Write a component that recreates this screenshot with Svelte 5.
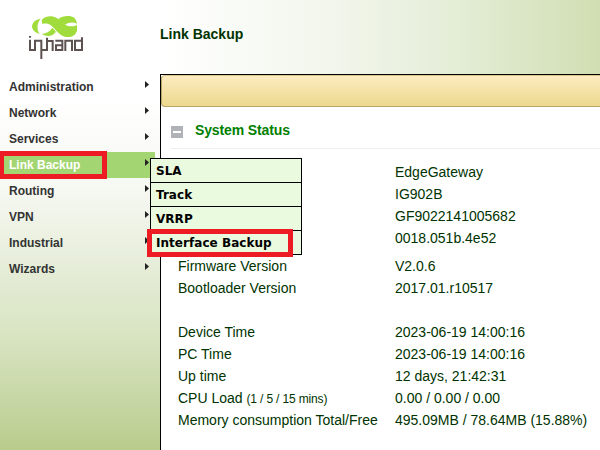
<script>
  const menu = ['Administration', 'Network', 'Services', 'Link Backup', 'Routing', 'VPN', 'Industrial', 'Wizards'];
  const submenu = ['SLA', 'Track', 'VRRP', 'Interface Backup'];
  const identity = ['EdgeGateway', 'IG902B', 'GF9022141005682', '0018.051b.4e52'];
  const rows = [
    ['Firmware Version', 'V2.0.6'],
    ['Bootloader Version', '2017.01.r10517'],
    ['', ''],
    ['Device Time', '2023-06-19 14:00:16'],
    ['PC Time', '2023-06-19 14:00:16'],
    ['Up time', '12 days, 21:42:31'],
    ['CPU Load', '0.00 / 0.00 / 0.00', '(1 / 5 / 15 mins)'],
    ['Memory consumption Total/Free', '495.09MB / 78.64MB (15.88%)']
  ];
</script>

<div class="page">
  <header>
    <svg class="logo" width="60" height="45" viewBox="84 45 180 135" aria-label="inhand">
      <g fill="#a0dc3c">
        <path d="M122 56C106 58 96 69 96 79S106 99 119 102C110 90 110 70 122 56Z" />
        <path d="M125 60C136 47 156 46 170 54C184 62 189 73 202 77C214 80 224 79 231 74V92C227 105 217 111 204 111C187 111 177 101 166 89C155 76 145 67 127 72Z" />
        <path d="M174 58C182 51 192 48 204 48C219 48 229 55 231 71C220 65 206 66 196 74C188 71 181 65 174 58Z" />
        <path d="M125 101C138 101 149 95 157 83L168 95C159 109 140 112 125 101Z" />
      </g>
      <g fill="none" stroke="#5c5250" stroke-width="6">
        <path d="M90 108V113M90 119V150H102M105 153V122H124V177M124 150H141V113M141 123H158V153M166 122H187V150H168V136H187M196 153V122H216V153M246 112V150H225V122H246" />
      </g>
    </svg>
    <h1>Link Backup</h1>
  </header>
  <div class="body">
    <nav>
      {#each menu as item, i}
        <div class="item" class:active={i === 3}>
          <span>{item}</span>
          <svg width="4" height="7" viewBox="0 0 4 7"><path d="M0 0L4 3.5L0 7Z" fill="#222" /></svg>
        </div>
      {/each}
    </nav>
    <main>
      <div class="notice"></div>
      <div class="section">
        <span class="collapse"></span>
        <h2>System Status</h2>
      </div>
      <div class="status">
        {#each identity as value}
          <div class="row"><span></span><span>{value}</span></div>
        {/each}
        <div class="spacer"></div>
        {#each rows as [label, value, note]}
          <div class="row">
            <span>{label}{#if note}&nbsp;<small>{note}</small>{/if}</span>
            <span>{value}</span>
          </div>
        {/each}
      </div>
    </main>
  </div>
  <div class="submenu">
    {#each submenu as item}
      <div>{item}</div>
    {/each}
  </div>
  <div class="mark mark-menu"></div>
  <div class="mark mark-sub"></div>
</div>

<style>
  :global(body) { margin: 0; }
  .page {
    position: relative;
    width: 600px;
    height: 450px;
    overflow: hidden;
    display: flex;
    flex-direction: column;
    background: #fff;
    font-family: 'Liberation Sans', Arial, sans-serif;
  }
  header {
    height: 74px;
    flex: none;
    display: flex;
    background: linear-gradient(90deg, #fff 160px, #f2f6ec 330px, #e7efdc 430px, #d9e5c2 540px, #d1deb3 600px);
  }
  .logo { margin: 15px 0 0 28px; width: 60px; flex: none; }
  h1 { margin: 25px 0 0 72px; font-size: 14px; line-height: 18px; color: #030; }
  .body { flex: 1; display: flex; background: linear-gradient(#fff 20px, #f6f8f2 115px, #e3ebd4 205px, #dae5c4 256px, #c9d8a8 320px, #b9cc8c 376px); }
  nav { width: 160px; flex: none; }
  .item {
    width: 155px;
    height: 26px;
    box-sizing: border-box;
    padding: 0 6px 0 9px;
    display: flex;
    justify-content: space-between;
    font-size: 12px;
    font-weight: bold;
    line-height: 26px;
    color: #333;
  }
  .item svg { margin-top: 7px; }
  .active { background: #a3d572; color: #fff; }
  main { flex: 1; border: solid #000; border-width: 1px 0 0 1px; background: #fff; }
  .notice {
    height: 32px;
    box-sizing: border-box;
    border: 1px solid #b9a567;
    border-top-color: #d8c48c;
    border-right: 0;
    border-radius: 4px 0 0 4px;
    background: linear-gradient(#fcecc0, #ecd88d);
  }
  .section {
    height: 42px;
    box-sizing: border-box;
    margin-left: 10px;
    display: flex;
    border-bottom: 1px solid #eee;
  }
  .collapse { width: 12px; height: 12px; margin-top: 19px; background: linear-gradient(#fff, #fff) center / 8px 2px no-repeat #afb2b6; }
  h2 { margin: 14px 0 0 12px; font-size: 14px; line-height: 18px; letter-spacing: -.13px; color: #008000; }
  .status { padding: 12px 0 0 17px; font-size: 14px; line-height: 22px; color: #030; }
  .row { display: flex; height: 22px; white-space: nowrap; }
  .row > span:first-child { width: 217px; flex: none; }
  small { font-size: 12px; letter-spacing: -.15px; }
  .spacer { height: 6px; }
  .submenu {
    position: absolute;
    left: 150px;
    top: 158px;
    width: 150px;
    border: 1px solid #000;
    background: #eafade;
    font: bold 12px/25px 'DejaVu Sans', Verdana, sans-serif;
    letter-spacing: .04px;
    color: #000;
  }
  .submenu div { height: 23px; padding-left: 5px; white-space: nowrap; }
  .submenu div + div { border-top: 1px solid #000; }
  .mark { position: absolute; box-sizing: border-box; border: 5px solid #ed1c24; }
  .mark-menu { left: -1px; top: 151px; width: 108px; height: 28px; }
  .mark-sub { left: 147px; top: 229px; width: 146px; height: 28px; }
</style>
